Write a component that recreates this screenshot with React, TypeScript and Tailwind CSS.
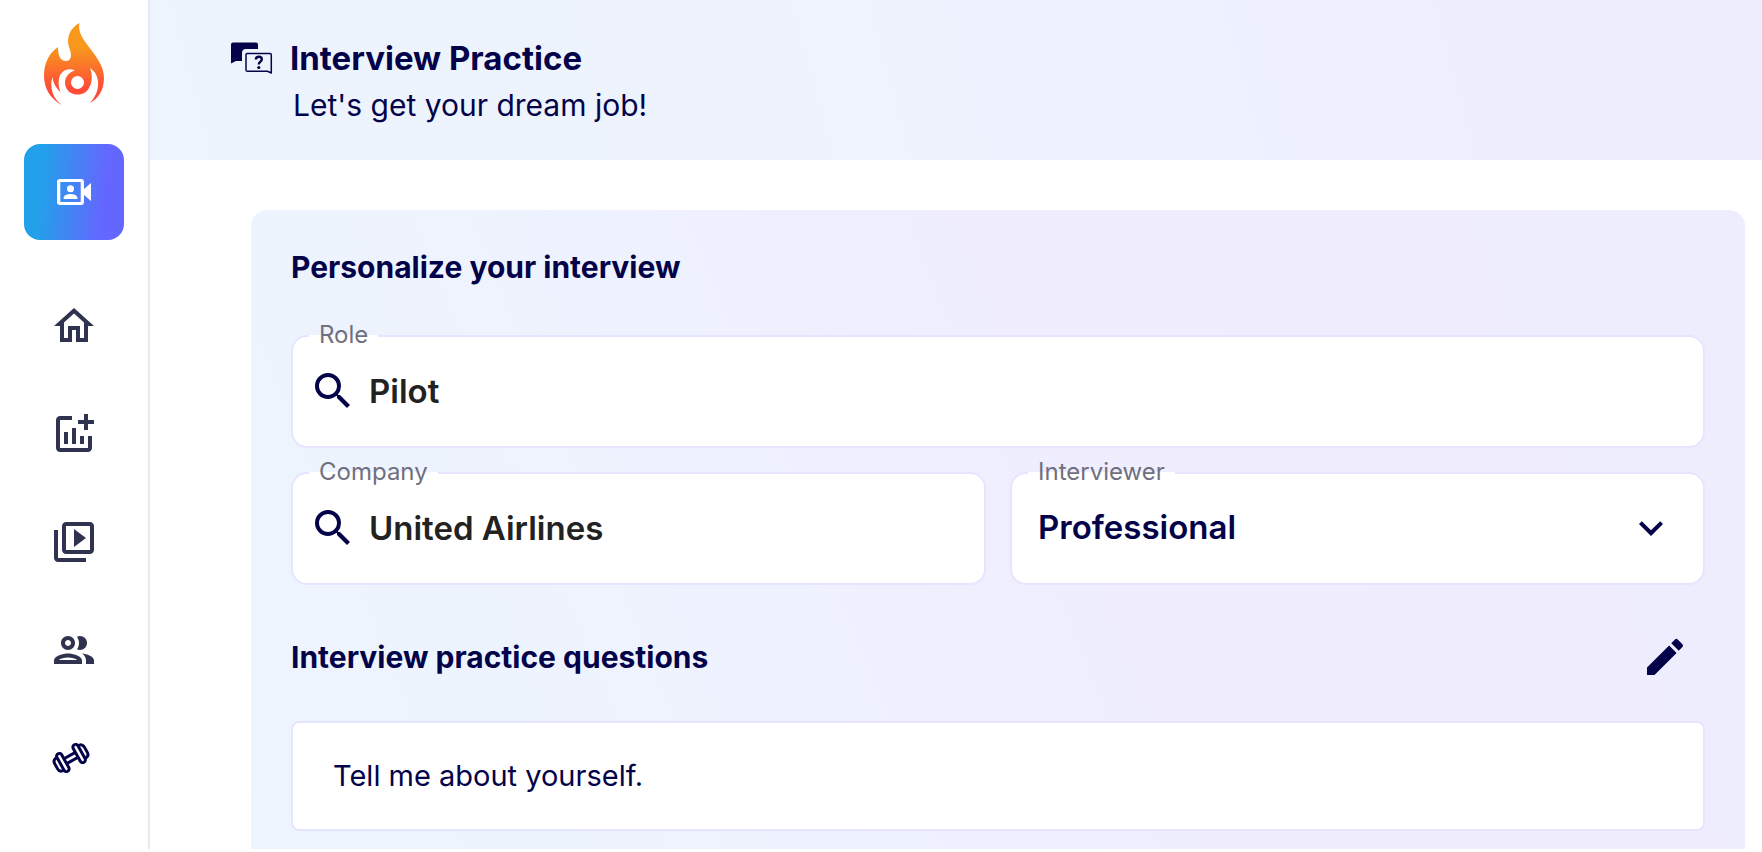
import React, { useState } from 'react';
import {
  MdEdit,
  MdKeyboardArrowDown,
  MdOutlineAddchart,
  MdOutlineGroup,
  MdOutlineHome,
  MdOutlineVideoLibrary,
  MdSearch,
} from 'react-icons/md';

interface FieldProps {
  id: string;
  label: string;
  children: React.ReactNode;
}

const questions = ['Tell me about yourself.'];

function Logo() {
  return (
    <svg viewBox="0 0 60 83" className="h-[83px] w-[60px]" aria-hidden="true">
      <defs>
        <linearGradient id="flame" x1="0" y1="0" x2="0" y2="1">
          <stop offset="0.3" stopColor="#f7981d" />
          <stop offset="0.8" stopColor="#ff4b38" />
        </linearGradient>
      </defs>
      <path
        fill="url(#flame)"
        d="M35.500 0C34 7 37 13 42 20C51 32 60 42 60 55C60 67 54 76 46 80C53 72 56 63 53 54C52 50 49 47 46 45C49 53 48 60 45 65C42 70 38 71.500 33 71.500C26 71.500 21 66 21 59.500C21 54 25 49 31 47.500C23 44 16 49 15 56C14 61 15 65 16.500 69C12 65 9 60 8.500 54C5 64 9 76 18 82C8 77 0 67 0 53C0 40 5 30 14 24C14 32 16 38 22 38C27 38 28 33 26 27C21 15 26 5 35.500 0Z"
      />
      <circle cx="33.500" cy="59.500" r="6.500" fill="#fff" />
    </svg>
  );
}

function VideoContactIcon() {
  return (
    <svg viewBox="0 0 34 26" className="h-[26px] w-[34px]" fill="currentColor" aria-hidden="true">
      <path
        fillRule="evenodd"
        d="M3 0H24Q27 0 27 3V10L34 4V22L27 16V23Q27 26 24 26H3Q0 26 0 23V3Q0 0 3 0ZM3.300 3V23H23.700V3Z"
      />
      <circle cx="13.500" cy="9.700" r="3.500" />
      <path d="M6.700 20V18.500C6.700 16 11 15 13.500 15S20.300 16 20.300 18.500V20Z" />
    </svg>
  );
}

function DumbbellIcon() {
  return (
    <svg viewBox="0 0 38 32" className="h-8 w-[38px]" fill="none" stroke="currentColor" strokeWidth="3" aria-hidden="true">
      <g transform="rotate(-29 19 16)" strokeLinejoin="round">
        <rect x="7" y="6" width="5.400" height="20" rx="2.700" />
        <rect x="25.600" y="6" width="5.400" height="20" rx="2.700" />
        <path d="M12.400 13.200H25.600M12.400 18.800H25.600" />
        <path d="M7 9C4 8.500 2 10 2 13V19C2 22 4 23.500 7 23M31 9C34 8.500 36 10 36 13V19C36 22 34 23.500 31 23" />
      </g>
    </svg>
  );
}

function QuestionBubblesIcon() {
  return (
    <svg viewBox="0 0 42 33" className="h-[33px] w-[42px]" fill="none" aria-hidden="true">
      <path fill="currentColor" d="M2 0.500H25Q27 0.500 27 2.500V7H15Q11 7 11 11V19H5L0 21.500V2.500Q0 0.500 2 0.500Z" />
      <path
        stroke="currentColor"
        strokeWidth="1.500"
        strokeLinejoin="round"
        d="M16 11.500H39Q40.300 11.500 40.300 13V31L36.500 29.300H16.500Q15 29.300 15 28V13Q15 11.500 16 11.500Z"
      />
      <path stroke="currentColor" strokeWidth="2.400" d="M24.800 17.500C25 13.800 30.800 14 30.800 17.300C30.800 19.800 27.800 19.500 27.800 22.500" />
      <circle cx="27.800" cy="25.500" r="1.600" fill="currentColor" />
    </svg>
  );
}

const navItems = [
  { label: 'Home', icon: <MdOutlineHome className="size-12" /> },
  { label: 'Reports', icon: <MdOutlineAddchart className="size-12" /> },
  { label: 'Recordings', icon: <MdOutlineVideoLibrary className="size-12" /> },
  { label: 'People', icon: <MdOutlineGroup className="size-12" /> },
];

function Sidebar() {
  return (
    <aside className="flex w-[150px] shrink-0 flex-col items-center border-r-2 border-[#e8e8f0] pt-[23px] text-[#2f3350]">
      <a href="#home" aria-label="Main page">
        <Logo />
      </a>
      <nav className="mt-[38px] flex flex-col gap-3">
        <a
          href="#practice"
          aria-label="Interview practice"
          className="mb-[26px] flex h-24 w-[100px] items-center justify-center rounded-2xl bg-linear-[95deg,#22a1ea_18%,#6467ff_78%] text-white"
        >
          <VideoContactIcon />
        </a>
        {navItems.map((item) => (
          <a
            key={item.label}
            href={`#${item.label.toLowerCase()}`}
            aria-label={item.label}
            className="flex h-24 w-[100px] items-center justify-center"
          >
            {item.icon}
          </a>
        ))}
        <a
          href="#training"
          aria-label="Training"
          className="flex h-24 w-[100px] items-center justify-center pr-1.5 text-[#04034a]"
        >
          <DumbbellIcon />
        </a>
      </nav>
    </aside>
  );
}

function Field({ id, label, children }: FieldProps) {
  return (
    <div className="relative flex h-[113px] min-w-0 flex-1 items-center rounded-2xl border-2 border-[#e6e4ff] bg-white pb-0.5">
      <label
        htmlFor={id}
        className="absolute -top-0.5 left-4 h-0.5 bg-white px-2.5 text-2xl leading-[0px] text-[#6f6f80]"
      >
        {label}
      </label>
      {children}
    </div>
  );
}

export default function App() {
  const [role, setRole] = useState('Pilot');
  const [company, setCompany] = useState('United Airlines');
  const [interviewer, setInterviewer] = useState('Professional');

  return (
    <div className="flex h-[calc(100vh-3px)] overflow-hidden bg-white font-['Inter',sans-serif] text-[#04034a]">
      <Sidebar />

      <div className="min-w-0 flex-1">
        {/* Header */}
        <header className="flex h-40 gap-[17px] bg-linear-[75deg,#edf4fd_0%,#eef3fe_45%,#eeedfe_100%] pt-[37px] pl-[81px]">
          <div className="pt-[5px]">
            <QuestionBubblesIcon />
          </div>
          <div>
            <h1 className="text-[33px] leading-[42px] font-bold">Interview Practice</h1>
            <p className="pl-[3px] text-[30px] leading-[52px]">Let's get your dream job!</p>
          </div>
        </header>

        {/* Interview settings */}
        <main className="mt-[50px] mr-[17px] ml-[101px] h-full rounded-2xl bg-linear-[68deg,#edf5fe_0%,#eef3fe_30%,#efedfe_60%,#eeedfe_100%] px-10 pt-9">
          <h2 className="text-[30px] leading-[42px] font-bold">Personalize your interview</h2>

          <div className="mt-[47px] flex flex-col gap-6">
            <div className="flex">
              <Field id="role" label="Role">
                <MdSearch className="ml-4 size-12 shrink-0" />
                <input
                  id="role"
                  type="text"
                  value={role}
                  onChange={(e) => setRole(e.target.value)}
                  className="h-full min-w-0 flex-1 bg-transparent px-3 text-[33px] font-semibold text-[#222] outline-none"
                />
              </Field>
            </div>
            <div className="flex gap-6">
              <Field id="company" label="Company">
                <MdSearch className="ml-4 size-12 shrink-0" />
                <input
                  id="company"
                  type="text"
                  value={company}
                  onChange={(e) => setCompany(e.target.value)}
                  className="h-full min-w-0 flex-1 bg-transparent px-3 text-[33px] font-semibold text-[#222] outline-none"
                />
              </Field>
              <Field id="interviewer" label="Interviewer">
                <select
                  id="interviewer"
                  value={interviewer}
                  onChange={(e) => setInterviewer(e.target.value)}
                  className="h-full min-w-0 flex-1 appearance-none bg-transparent pl-[26px] text-[33px] font-semibold outline-none"
                >
                  <option>Professional</option>
                </select>
                <MdKeyboardArrowDown className="pointer-events-none mr-7 size-12 shrink-0" />
              </Field>
            </div>
          </div>

          {/* Questions */}
          <div className="mt-12 flex items-center justify-between">
            <h2 className="text-[30px] leading-[42px] font-bold">Interview practice questions</h2>
            <button type="button" aria-label="Edit questions" className="mr-4">
              <MdEdit className="size-12" />
            </button>
          </div>
          <ul className="mt-10 flex flex-col gap-6">
            {questions.map((question) => (
              <li key={question} className="rounded-lg border-2 border-[#e6e4ff] bg-white px-10 py-[30px] text-[29px] leading-[46px]">
                {question}
              </li>
            ))}
          </ul>
        </main>
      </div>
    </div>
  );
}
